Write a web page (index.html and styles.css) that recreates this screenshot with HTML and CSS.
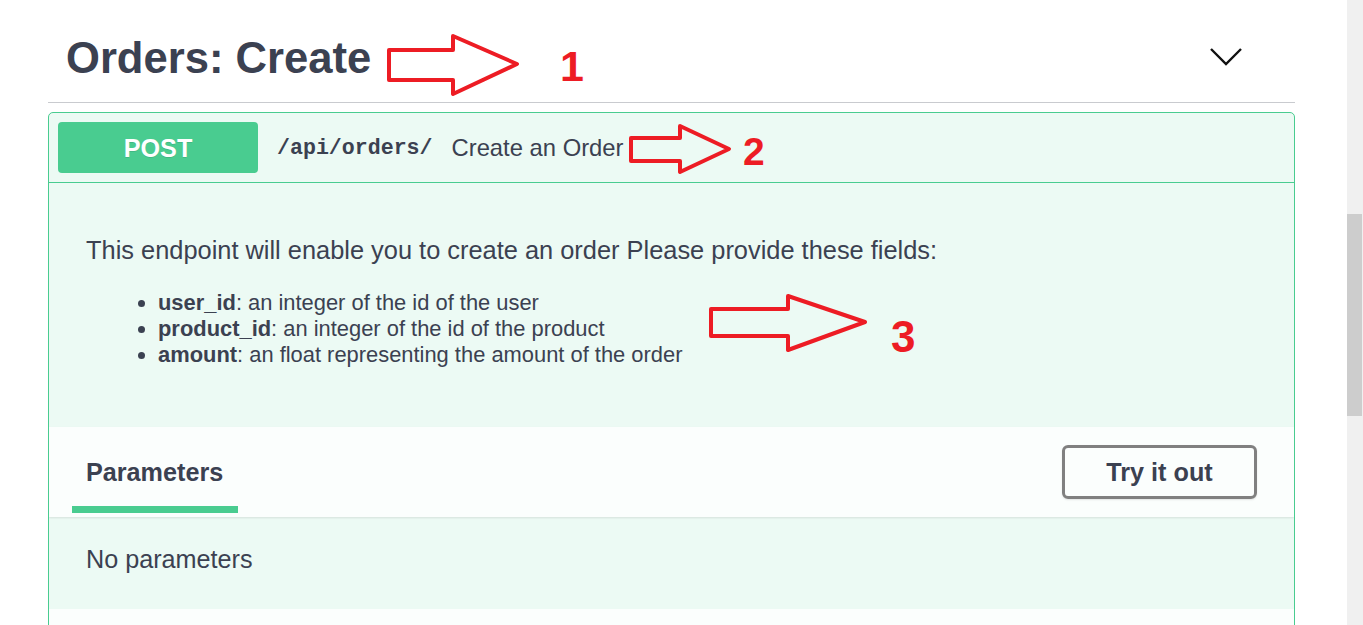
FILE: index.html
```html
<!DOCTYPE html>
<html lang="en">
<head>
<meta charset="utf-8">
<title>Orders: Create</title>
<link rel="stylesheet" href="styles.css">
</head>
<body>
<div class="page">
  <div class="tag-header">
    <h3 class="tag-title">Orders: Create</h3>
    <svg class="chevron" width="32" height="18" viewBox="0 0 32 18"><polyline points="1,1 16,16 31,1" fill="none" stroke="#111" stroke-width="2.4"/></svg>
  </div>
  <div class="opblock">
    <div class="summary">
      <span class="method">POST</span>
      <span class="path">/api/orders/</span>
      <span class="summary-desc">Create an Order</span>
    </div>
    <div class="description">
      <p>This endpoint will enable you to create an order Please provide these fields:</p>
      <ul>
        <li><strong>user_id</strong>: an integer of the id of the user</li>
        <li><strong>product_id</strong>: an integer of the id of the product</li>
        <li><strong>amount</strong>: an float representing the amount of the order</li>
      </ul>
    </div>
    <div class="section-header">
      <div class="tab">
        <span class="tab-label">Parameters</span>
        <span class="tab-line"></span>
      </div>
      <button class="try-btn">Try it out</button>
    </div>
    <div class="section-body">No parameters</div>
    <div class="section-header next"></div>
  </div>
</div>
<div class="scrollbar"><div class="thumb"></div></div>

<svg class="annotations" width="1363" height="625" viewBox="0 0 1363 625">
  <g fill="none" stroke="#ed1c24" stroke-width="4" stroke-linejoin="round">
    <polygon points="389,50 453,50 453,36 517,64 453,94 453,80 389,80"/>
    <polygon points="631,138 680,138 680,126 729,149 680,172 680,161 631,161"/>
    <polygon points="711,309 788,309 788,296 865,322 788,350 788,336 711,336"/>
  </g>
  <g fill="#ed1c24" font-family="Liberation Sans, Arial, sans-serif" font-weight="700">
    <text x="560" y="81" font-size="43">1</text>
    <text x="743" y="165" font-size="39">2</text>
    <text x="891" y="352" font-size="44">3</text>
  </g>
</svg>
</body>
</html>
```

FILE: styles.css
```css
html, body {
  margin: 0;
  padding: 0;
  height: 625px;
  overflow: hidden;
  background: #fff;
}

body {
  display: flex;
  font-family: "Liberation Sans", Arial, sans-serif;
  color: #3b4151;
  position: relative;
}

.page {
  flex: 1;
  padding: 0 52px 0 48px;
}

.scrollbar {
  width: 16px;
  background: #f0f0f0;
}

.thumb {
  margin-top: 214px;
  height: 202px;
  width: 15px;
  background: #cdcdcd;
}

.tag-header {
  display: flex;
  align-items: center;
  justify-content: space-between;
  padding: 33px 53px 19px 18px;
  border-bottom: 1px solid #c9cbcf;
}

.tag-title {
  margin: 0;
  font-size: 43.6px;
  line-height: 50px;
  font-weight: 700;
  color: #3b4151;
}

.chevron {
  display: block;
  margin-top: -3px;
}

.opblock {
  margin-top: 9px;
  border: 1px solid #49cc90;
  border-radius: 5px;
  background: rgba(73, 204, 144, 0.1);
  overflow: hidden;
}

.summary {
  display: flex;
  align-items: center;
  padding: 9px;
  border-bottom: 1px solid #49cc90;
}

.method {
  width: 200px;
  height: 51px;
  display: flex;
  align-items: center;
  justify-content: center;
  background: #49cc90;
  border-radius: 4px;
  color: #fff;
  font-weight: 700;
  font-size: 25.2px;
  padding-top: 2px;
  box-sizing: border-box;
  text-shadow: 0 1px 0 rgba(0, 0, 0, 0.1);
}

.path {
  margin: 0 19px 0 19px;
  font-family: "Liberation Mono", "Courier New", monospace;
  font-weight: 700;
  font-size: 21.6px;
  color: #3b4151;
}

.summary-desc {
  font-size: 23.8px;
  color: #3b4151;
}

.description {
  padding: 51px 37px 59px 37px;
}

.description p {
  margin: 0;
  font-size: 25.4px;
  line-height: 32px;
}

.description ul {
  margin: 24px 0 0 0;
  padding-left: 72px;
}

.description li {
  font-size: 21.9px;
  line-height: 26px;
}

.section-header {
  display: flex;
  align-items: flex-start;
  justify-content: space-between;
  height: 90px;
  padding: 0 37px 0 23px;
  background: rgba(255, 255, 255, 0.8);
  box-shadow: 0 1px 2px rgba(0, 0, 0, 0.1);
}

.tab {
  display: flex;
  flex-direction: column;
  padding-top: 30px;
}

.tab-label {
  padding: 0 14px;
  font-size: 25.2px;
  font-weight: 700;
  line-height: 30px;
}

.tab-line {
  margin-top: 19px;
  width: 166px;
  height: 7px;
  background: #49cc90;
}

.try-btn {
  margin-top: 18px;
  width: 195px;
  height: 54px;
  border: 3px solid #808080;
  border-radius: 6px;
  background: transparent;
  box-shadow: 0 1px 2px rgba(0, 0, 0, 0.1);
  font-family: "Liberation Sans", Arial, sans-serif;
  font-weight: 700;
  font-size: 25.2px;
  color: #3b4151;
  padding: 0;
}

.section-body {
  padding: 27px 37px 35px 37px;
  font-size: 25.2px;
  line-height: 30px;
}

.section-header.next {
  height: 40px;
  box-shadow: none;
}

.annotations {
  position: absolute;
  top: 0;
  left: 0;
  pointer-events: none;
}
```
